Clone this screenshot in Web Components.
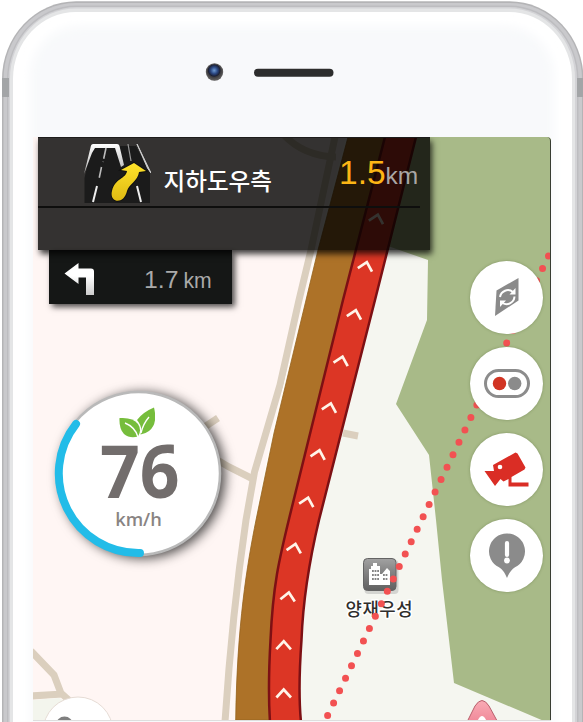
<!DOCTYPE html>
<html lang="ko">
<head>
<meta charset="utf-8">
<title>Navigation</title>
<style>
html,body{margin:0;width:583px;height:722px;overflow:hidden;background:#fff;font-family:"Liberation Sans","Noto Sans CJK KR",sans-serif}
</style>
</head>
<body>
<phone-frame>
  <nav-screen>
    <road-map slot="map"></road-map>
    <turn-panel slot="turn" distance="1.5" unit="km">지하도우측</turn-panel>
    <next-turn slot="next" distance="1.7" unit="km"></next-turn>
    <speed-gauge slot="speed" unit="km/h">76</speed-gauge>
    <tool-rail slot="tools">
      <round-button icon="rotate"></round-button>
      <round-button icon="signal"></round-button>
      <round-button icon="camera"></round-button>
      <round-button icon="alert"></round-button>
    </tool-rail>
  </nav-screen>
</phone-frame>
<script>
function define(name, render){
  customElements.define(name, class extends HTMLElement{
    connectedCallback(){
      if(!this.shadowRoot) this.attachShadow({mode:'open'}).innerHTML = render(this);
    }
  });
}

define('phone-frame', () => `
<style>
:host{display:block;position:relative;box-sizing:border-box;width:583px;height:722px;padding:137px 32px 2px 33px;overflow:hidden;background:#fff}
.body{position:absolute;inset:0;width:583px;height:722px}
slot{position:relative}
</style>
<svg class="body" viewBox="0 0 583 722">
  <defs>
    <filter id="soft" x="-10%" y="-10%" width="120%" height="120%"><feGaussianBlur stdDeviation="5"/></filter>
    <radialGradient id="lens" cx=".48" cy=".4" r=".6"><stop offset="0" stop-color="#6f9bd2"/><stop offset=".35" stop-color="#2c4a86"/><stop offset=".62" stop-color="#1c2035"/><stop offset=".7" stop-color="#3c3b3e"/><stop offset="1" stop-color="#5d5b5b"/></radialGradient>
  </defs>
  <rect x="2" y="1.3" width="581.5" height="800" rx="74" ry="78" fill="#b4b4b6"/>
  <rect x="3.5" y="3" width="578.5" height="800" rx="72" ry="76" fill="#c9c9cc"/>
  <rect x="7" y="5.5" width="571.5" height="800" rx="69" ry="74" fill="#bdbdc0"/>
  <rect x="8.5" y="7" width="568.5" height="800" rx="68" ry="72" fill="#d3d3d6"/>
  <rect x="10" y="8.5" width="565" height="800" rx="66" ry="70" fill="#e4e5e6"/>
  <rect x="13" y="12" width="559" height="800" rx="63" ry="67" fill="#fff"/>
  <rect x="30" y="26" width="524" height="800" rx="50" fill="#f8f9fb" filter="url(#soft)"/>
  <path d="M2 78h7v19H2zM577 78h6v19h-6z" fill="#a3a5a7"/>
  <circle cx="214.5" cy="72" r="8.7" fill="#5b5959"/><circle cx="214.5" cy="72" r="7.8" fill="url(#lens)"/>
  <rect x="254" y="68.7" width="79.5" height="8" rx="4" fill="#2d2d2d"/>
</svg>
<slot></slot>`);

define('nav-screen', () => `
<style>
:host{display:block;position:relative;width:518px;height:583px;overflow:hidden;border-bottom:1px solid #dedede;border-top-right-radius:4px}
.edge{position:absolute;inset:0;border-right:1.5px solid #383d32;border-top-right-radius:4px}
.layer{position:absolute}
.turn{left:4.5px;top:0}.next{left:16px;top:113px}.speed{left:22px;top:253px}.tools{left:436.5px;top:124px}
</style>
<slot name="map"></slot>
<div class="layer next"><slot name="next"></slot></div>
<div class="layer turn"><slot name="turn"></slot></div>
<div class="layer speed"><slot name="speed"></slot></div>
<div class="layer tools"><slot name="tools"></slot></div>
<div class="edge"></div>`);

const chevrons = [[377,218,14],[366,265.5,14],[355,313.5,14],[341.7,360,14],[330,406.8,14],[318.7,453.7,14],[307.3,501,14],[294.7,547.3,13],[288.3,596,9],[283.7,644.7,1],[283.7,693,0]];
define('road-map', () => `
<style>:host{display:block}svg{display:block}text{font:500 17.8px "Noto Sans CJK KR",sans-serif}</style>
<svg width="518" height="583" viewBox="33 137 518 583">
  <defs><linearGradient id="b" x1="0" y1="0" x2="0" y2="1"><stop offset="0" stop-color="#a2a2a2"/><stop offset=".4" stop-color="#858585"/><stop offset="1" stop-color="#606060"/></linearGradient>
  <linearGradient id="p" x1="0" y1="0" x2="0" y2="1"><stop offset="0" stop-color="#f9abb5"/><stop offset="1" stop-color="#ee7f91"/></linearGradient></defs>
  <rect x="33" y="137" width="518" height="583" fill="#fff6f4"/>
  <path d="M385 137H551V720H270Z" fill="#f5f6f0"/>
  <path d="M400 137H551V724L454 683 442 580 436 520 429 455 396 404 427 320 428 260 385 245Z" fill="#a8ba88"/>
  <g fill="none" stroke="#dbcfbe" stroke-width="7">
    <path d="M335 137L311 250 299 300 280 385 254.500 472 246 520Q232 615 225 722"/>
    <path d="M283 134Q303 156 336 157"/>
    <path d="M200 430L218 418M207 454L229 467 253 479"/>
    <path d="M343 433L358 436"/>
    <path d="M31 651L54 675 62 696M31 696L62 694 71 702"/>
  </g>
  <path d="M33 700L59 698 68 703V720H33Z" fill="#f3f5ed"/>
  <path d="M346 137L316 250 304.500 300 272 433 254.500 520C246 565 237 640 234.500 720H300V500L390 137Z" fill="#fffdf8"/>
  <path d="M348 137L318 250 306 300 274 433 256 520C247 565 237 625 235.700 720H290V560L400 137Z" fill="#ad7228" stroke="#96621e" stroke-width=".8"/>
  <path d="M385 137L343 300 289.500 517C279 560 273 585 270.500 640 268.500 675 268.500 700 270 722H301C299 702 299 675 301.500 640 303 600 309 562 319 520L375 300 416 137Z" fill="#dc3625"/>
  <path d="M385 137L343 300 289.500 517C279 560 273 585 270.500 640 268.500 675 268.500 700 270 722M301 722C299 702 299 675 301.500 640 303 600 309 562 319 520L375 300 416 137" fill="none" stroke="#7d1014" stroke-width="2.500"/>
  <g fill="none" stroke="#fff5e9" stroke-width="2.700">${chevrons.map(([x,y,r])=>`<path transform="translate(${x} ${y}) rotate(${r})" d="M-7.300 4.500L0 -3.500 7.300 4.500"/>`).join('')}</g>
  <rect x="364.500" y="560" width="34" height="34" rx="4" fill="#d4d5d1"/>
  <rect x="363.500" y="558.500" width="32.500" height="32" rx="4" fill="url(#b)" stroke="#646464"/>
  <path d="M369 585V569H371V566H373V563H377V566H380V574H382L387 568 390 571V585Z" fill="#fff"/>
  <path d="M372 571h7M372 575h7M372 579h7M383 575h5M383 579h5" stroke="#858585" stroke-width="2" stroke-dasharray="1.800 .8"/>
  <text x="345.500" y="616.300" textLength="67" fill="#2f2e2d" stroke="#fff" stroke-width="3" paint-order="stroke" stroke-linejoin="round">양재우성</text>
  <path d="M548.500 256L327.400 716" stroke="#f25152" stroke-width="7" stroke-linecap="round" stroke-dasharray="0 13.780"/>
  <path d="M464 728L475 706Q482 695 489 706L501 728Z" fill="url(#p)" stroke="#b8606c"/><path d="M477 722Q482 710 487 722Z" fill="#fff"/>
  <circle cx="78" cy="732" r="35" fill="#fff" stroke="#e6dcd5"/><circle cx="64.500" cy="725" r="8.500" fill="#7f7f7f"/>
</svg>`);

define('turn-panel', el => `
<style>
:host{display:block;box-sizing:border-box;width:392px;height:113px;background:rgba(1,1,0,.8);box-shadow:2px 4px 6px rgba(0,0,0,.75);border-top:1px solid #1d1c1b}
.row{display:flex;align-items:flex-start;height:68px;width:382px;border-bottom:2px solid #0e0e0d}
svg{margin:4px 0 0 45px;flex:none}
.name{color:#fff;font:500 23.6px/30px "Noto Sans CJK KR",sans-serif;margin:27px 0 0 13px;width:175.5px;white-space:nowrap}
.dist{display:flex;align-items:baseline;white-space:nowrap;margin-top:15px}
b{font:400 33.500px/40px "Liberation Sans",sans-serif;color:#fdb515;letter-spacing:0}
i{font:400 24.500px/40px "Liberation Sans",sans-serif;color:#aaa6a5}
</style>
<div class="row">
<svg width="68" height="62" viewBox="83 141 68 62">
  <defs><linearGradient id="y" x1="0" y1="0" x2="0" y2="1"><stop stop-color="#ffe32a"/><stop offset="1" stop-color="#dfba13"/></linearGradient>
  <linearGradient id="w" x1="0" y1="0" x2="0" y2="1"><stop stop-color="#fff"/><stop offset="1" stop-color="#fff" stop-opacity=".65"/></linearGradient></defs>
  <path d="M84.500 177L92 145H136L150 172V202H84.500Z" fill="#1b1b1b"/>
  <path d="M84 173L91 144.500Q91.500 143 93 143H117Q119 143 119.500 145L124 164 121 166 115 147H95L92 152Z" fill="url(#w)"/>
  <path d="M137 143L151 172 147.500 167Z" fill="#ddd" stroke="#ccc"/>
  <path d="M106 147L103 161M101.500 166L99 178" stroke="#bbb" stroke-width="1.600" stroke-dasharray="11 3"/>
  <path d="M97 185L93 201M137 185L141 201" stroke="#eee" stroke-width="2"/>
  <path d="M128 143L131 160" stroke="#999" stroke-width="1.200"/>
  <path d="M134 162L146 170 139 171C138 180 129 183 127 190C124 204 109 202 112 190C115 177 126 178 127 170L121 169Z" fill="url(#y)" stroke="#111" stroke-width="2" paint-order="stroke"/>
</svg>
<div class="name"><slot></slot></div>
<div class="dist"><b>${el.getAttribute('distance')}</b><i>${el.getAttribute('unit')}</i></div>
</div>`);

define('next-turn', el => `
<style>
:host{display:flex;align-items:flex-start;box-sizing:border-box;width:183px;height:54px;background:#151716;box-shadow:3px 3px 6px rgba(0,0,0,.7)}
svg{margin:13px 0 0 15px;flex:none}
.dist{display:flex;align-items:baseline;gap:5px;margin:15px 0 0 48px;color:#aaa;white-space:nowrap}
b{font:400 24.800px/30px "Liberation Sans",sans-serif}
i{font:400 21.200px/30px "Liberation Sans",sans-serif}
</style>
<svg width="32" height="34" viewBox="64 263 32 34"><defs><linearGradient id="g" x1="0" y1="0" x2="0" y2="1"><stop offset=".4" stop-color="#fff"/><stop offset="1" stop-color="#ccc"/></linearGradient></defs>
<path d="M64.500 273.500L78.500 263V268.500H91Q94 268.500 94 271.500V295H86V277.500H78.500V284Z" fill="url(#g)"/></svg>
<div class="dist"><b>${el.getAttribute('distance')}</b><i>${el.getAttribute('unit')}</i></div>`);

define('speed-gauge', el => `
<style>
:host{display:grid;justify-items:center;align-content:start;position:relative;box-sizing:border-box;width:167px;height:168px;padding-top:17px;font-family:"Open Sans","Noto Sans",sans-serif}
.ring{position:absolute;inset:0;overflow:visible}
.ring .disc{filter:drop-shadow(4px 2px 6px rgba(0,0,0,.7))}
.leaf{position:relative;margin-right:4px}
.num{position:relative;font-size:73px;font-weight:700;line-height:64px;color:#726d6c;height:64px;margin-left:2px;transform:scaleX(.955)}
.unit{position:relative;font-size:18.300px;font-weight:600;line-height:24px;color:#898483;margin-top:5px}
</style>
<svg class="ring" width="167" height="168" viewBox="55 390 167 168">
  <circle class="disc" cx="138.500" cy="473.500" r="81.500" fill="#fff" stroke="#b9b9b9" stroke-width="2.500"/>
  <path d="M76 424A79.600 79.600 0 0 0 140 553" fill="none" stroke="#22bce8" stroke-width="8" stroke-linecap="round"/>
</svg>
<svg class="leaf" width="36" height="31" viewBox="119 407 36 31">
  <path d="M119.500 418Q133 417 138 424Q142 430 138 436.500Q130 439 124 434Q119 429 119.500 418Z" fill="#76bd3c"/>
  <path d="M154 407.500Q158 424 149 431Q145 434 140.500 434.500Q143 427 137 420Q143 412 154 407.500Z" fill="#76bd3c"/>
  <path d="M125 423Q135 427 138 437M149 417Q143 424 141 433" fill="none" stroke="#fff" stroke-width="1.400"/>
</svg>
<div class="num"><slot></slot></div>
<div class="unit">${el.getAttribute('unit')}</div>`);

define('tool-rail', () => `<style>:host{display:flex;flex-direction:column;gap:13px}</style><slot></slot>`);

const icons = {
rotate:`<g fill="#8a8a8a"><path d="M26.500 29.500L48.500 17V39.500L25 55Z"/></g><g fill="none" stroke="#fff" stroke-width="2"><path d="M30 36A8 8 0 0 1 43 31M44.500 35.500A8 8 0 0 1 32.500 42"/></g><path d="M45.500 27V33.500H39.500ZM30 46V39.500H36Z" fill="#fff"/>`,
signal:`<rect x="15.500" y="23.500" width="43" height="26" rx="13" fill="#fff" stroke="#8c8c8c" stroke-width="3"/><circle cx="29.500" cy="36.500" r="6.700" fill="#d13423"/><circle cx="44.700" cy="36.500" r="6.700" fill="#8b8b8b"/>`,
camera:`<path d="M23 32L45.500 19.500 47.500 20.500 55.500 34.500 54.500 36.500 41.500 44V49.500H58.500V53.500H38.500V46L33.500 48.500 30.500 46 25 53 14.500 38H24Z" fill="#da2d25"/><circle cx="30" cy="34" r="2.300" fill="#fff"/>`,
alert:`<path d="M37 14.500A17.800 17.800 0 0 1 45 48.300Q40 51.500 37 59Q34 51.500 29 48.300A17.800 17.800 0 0 1 37 14.500Z" fill="#8b8b8b"/><path d="M37 24V36" stroke="#fff" stroke-width="4.200" stroke-linecap="round"/><circle cx="37" cy="41.500" r="2.900" fill="#fff"/>`
};
define('round-button', el => `
<style>:host{display:block;width:73px;height:73px;border-radius:50%;background:#fff;box-shadow:0 0 3px rgba(70,90,40,.4)}svg{display:block}</style>
<svg width="73" height="73" viewBox="0 0 73 73">${icons[el.getAttribute('icon')]}</svg>`);
</script>
</body>
</html>
